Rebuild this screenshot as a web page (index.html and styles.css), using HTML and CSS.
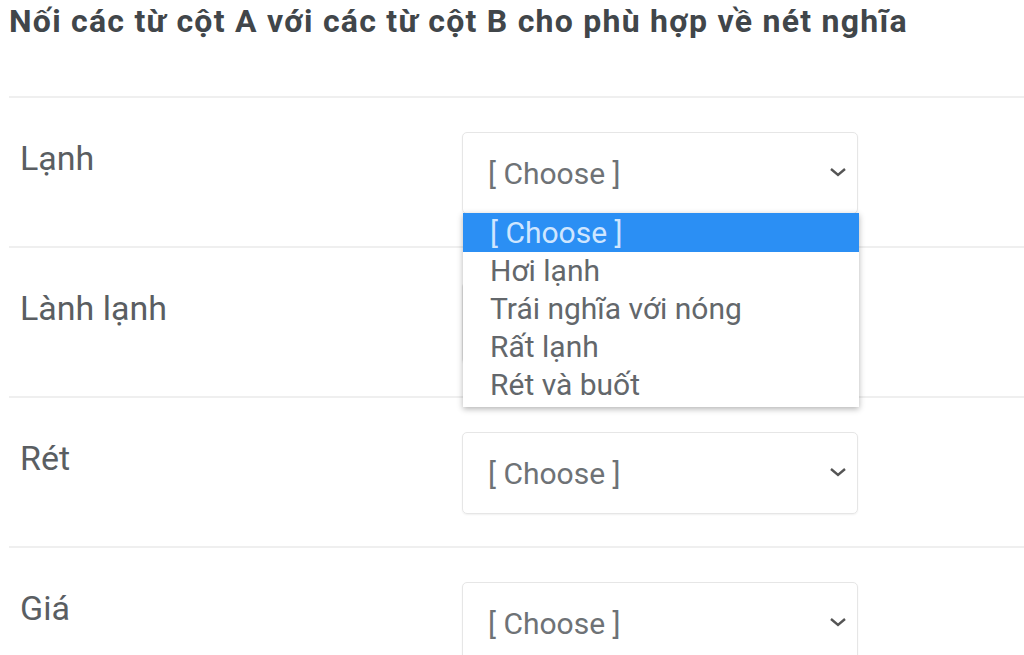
FILE: index.html
```html
<!DOCTYPE html>
<html lang="vi">
<head>
    <meta charset="UTF-8">
    <meta name="viewport" content="width=device-width, initial-scale=1.0">
    <title>Nối từ</title>
    <link rel="stylesheet" href="styles.css">
</head>
<body>
    <div class="quiz">
      <h1 class="title">Nối các từ cột A với các từ cột B cho phù hợp về nét nghĩa</h1>

      <div class="row">
        <div class="word">Lạnh</div>
        <div class="select open">
          <span>[ Choose ]</span>
          <svg class="chevron" width="18" height="12" viewBox="0 0 18 12"><polyline points="2,3 9,9 16,3" fill="none" stroke="#555" stroke-width="2.4"/></svg>
          <ul class="options">
            <li class="active">[ Choose ]</li>
            <li>Hơi lạnh</li>
            <li>Trái nghĩa với nóng</li>
            <li>Rất lạnh</li>
            <li>Rét và buốt</li>
          </ul>
        </div>
      </div>

      <div class="row">
        <div class="word">Lành lạnh</div>
        <div class="select">
          <span>[ Choose ]</span>
          <svg class="chevron" width="18" height="12" viewBox="0 0 18 12"><polyline points="2,3 9,9 16,3" fill="none" stroke="#555" stroke-width="2.4"/></svg>
        </div>
      </div>

      <div class="row">
        <div class="word">Rét</div>
        <div class="select">
          <span>[ Choose ]</span>
          <svg class="chevron" width="18" height="12" viewBox="0 0 18 12"><polyline points="2,3 9,9 16,3" fill="none" stroke="#555" stroke-width="2.4"/></svg>
        </div>
      </div>

      <div class="row">
        <div class="word">Giá</div>
        <div class="select">
          <span>[ Choose ]</span>
          <svg class="chevron" width="18" height="12" viewBox="0 0 18 12"><polyline points="2,3 9,9 16,3" fill="none" stroke="#555" stroke-width="2.4"/></svg>
        </div>
      </div>
    </div>
</body>
</html>
```

FILE: styles.css
```css
body {
  margin: 0;
  background: #fff;
  font-family: Roboto, "Noto Sans", sans-serif;
  overflow: hidden;
}

.quiz {
  padding: 0 0 0 9px;
}

.title {
  margin: 2px 0 56px 0;
  font-size: 32px;
  line-height: 38px;
  letter-spacing: 1.25px;
  font-weight: bold;
  color: #41464a;
  white-space: nowrap;
}

.row {
  display: flex;
  height: 148px;
  border-top: 2px solid #efefef;
}

.word {
  width: 453px;
  padding: 40px 0 0 11px;
  box-sizing: border-box;
  font-size: 34px;
  line-height: 40px;
  color: #5a5e62;
}

.select {
  position: relative;
  display: flex;
  align-items: center;
  justify-content: space-between;
  margin-top: 34px;
  width: 396px;
  height: 82px;
  padding: 0 10px 0 25px;
  box-sizing: border-box;
  border: 1px solid #e6e6e6;
  border-radius: 5px;
  box-shadow: 0 1px 2px rgba(0, 0, 0, 0.06);
  font-size: 30px;
  color: #6e7276;
}

.chevron {
  margin-bottom: 2px;
}

/* open list of the first select, drawn over the next row */
.options {
  position: absolute;
  top: 80px;
  left: 0;
  width: 396px;
  margin: 0;
  padding: 0 0 3px 0;
  list-style: none;
  background: #fff;
  box-shadow: 0 2px 6px rgba(0, 0, 0, 0.3);
  z-index: 2;
}

.options li {
  height: 38px;
  line-height: 38px;
  padding-left: 27px;
  font-size: 30px;
  color: #63676b;
}

.options li.active {
  height: 39px;
  line-height: 40px;
  background: #2b8ff4;
  color: #cfe6ff;
}
```
